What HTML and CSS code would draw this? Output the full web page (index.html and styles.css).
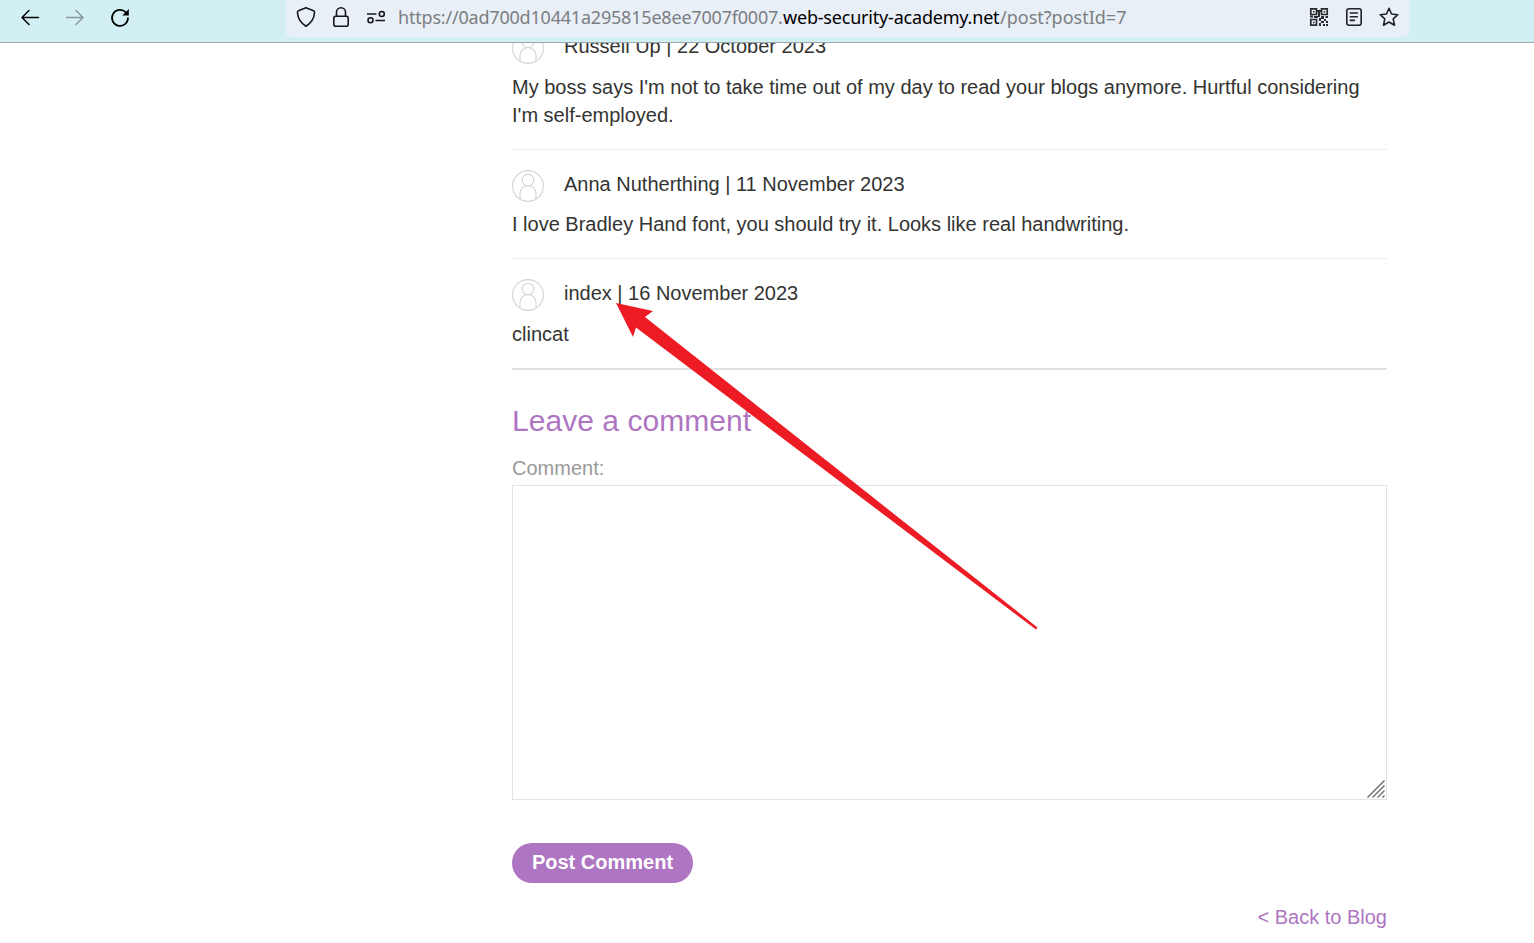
FILE: index.html
```html
<!DOCTYPE html>
<html lang="en">
<head>
<meta charset="utf-8">
<title>Blog post</title>
<link rel="stylesheet" href="styles.css">
</head>
<body>
<svg class="defs" width="0" height="0"><symbol id="avatar" viewBox="0 0 32 32"><g fill="none" stroke="#ced3d3" stroke-width="1.1"><circle cx="16" cy="16" r="15.4"/><circle cx="16" cy="10" r="5.8"/><path d="M8 29.2V23.5a8 8 0 0 1 16 0V29.2"/></g></symbol></svg>
<header class="toolbar">
  <nav class="nav">
    <svg width="20" height="20" viewBox="0 0 20 20" fill="none" stroke="#000" stroke-width="1.5" stroke-linecap="round" stroke-linejoin="round"><path d="M18.500 9.500H2M9 2.500L2 9.500l7 7"/></svg>
    <svg width="20" height="20" viewBox="0 0 20 20" fill="none" stroke="#879698" stroke-width="1.4" stroke-linecap="round" stroke-linejoin="round"><path d="M1.500 9.500H18M11 2.500l7 7-7 7"/></svg>
    <svg width="20" height="20" viewBox="0 0 20 20" fill="none" stroke="#000" stroke-width="1.7" stroke-linecap="round"><path d="M18 10a8 8 0 1 1-2.2-5.600"/><path d="M18.800 1v6.500h-6.500z" fill="#000" stroke="none"/></svg>
  </nav>
  <div class="address">
    <div class="info">
      <svg width="20" height="22" viewBox="0 0 20 22" fill="none" stroke="#15171a" stroke-width="1.6" stroke-linejoin="round"><path d="M10 1.800L17.600 4.700Q18.800 5.100 18.500 7C18 13.500 15.200 17 10 20.200C4.800 17 2 13.500 1.500 7Q1.200 5.100 2.400 4.700Z"/></svg>
      <svg width="20" height="22" viewBox="0 0 20 22" fill="none" stroke="#15171a" stroke-width="1.6"><rect x="2.800" y="10.300" width="14.400" height="9.900" rx="2"/><path d="M5.500 10V6.300a4.500 4.500 0 0 1 9 0V10"/></svg>
      <svg width="20" height="22" viewBox="0 0 20 22" fill="none" stroke="#15171a" stroke-width="1.6"><path d="M1 8h9.500M9.500 14.500H19"/><circle cx="15.800" cy="8" r="2.500"/><circle cx="4.500" cy="14.300" r="2.500"/></svg>
    </div>
    <div class="url"><span class="origin">https://0ad700d10441a295815e8ee7007f0007.</span><span class="domain">web-security-academy.net</span><span class="path">/post?postId=7</span></div>
    <div class="actions">
      <svg width="20" height="20" viewBox="0 0 20 20"><g fill="none" stroke="#292b2f" stroke-width="1.700"><path d="M1.800 1.800h5.700v5.700H1.800zM12.500 1.800h5.700v5.700h-5.700zM1.800 12.500h5.700v5.700H1.800z"/></g><path fill="#292b2f" d="M4 4h1.500v1.500H4zM14.700 4h1.500v1.500h-1.500zM4 14.700h1.500v1.500H4zM8 3h4v2H8zM9 5h2v5H9zM1 8.500h3v2H1zM5 9h4v2H5zM12 9h3v3h-3zM16.500 9H19v2h-2.500zM10 11h2v3h-2zM12 14h3v2h-3zM15 12h2v2h-2zM17 14h2v2h-2zM10 16h2v3h-2zM14 17h2v2h-2zM17 17h2v2h-2z"/></svg>
      <svg width="20" height="20" viewBox="0 0 20 20" fill="none" stroke="#202226" stroke-width="1.600" stroke-linecap="round"><rect x="2.800" y="1.800" width="14.400" height="16.400" rx="2.200"/><path d="M6.300 6h7M6.300 9.700h7M6.300 13.400h4"/></svg>
      <svg width="20" height="20" viewBox="0 0 20 20" fill="none" stroke="#202226" stroke-width="1.600" stroke-linejoin="round"><path d="M10 1.300l2.500 5.700 6.300.7-4.600 4.200 1.300 6.300-5.500-3.200-5.500 3.200 1.300-6.300L1.200 7.700l6.300-.7z"/></svg>
    </div>
  </div>
</header>
<main class="page">
  <div class="content">
    <section class="comment first">
      <div class="author"><svg class="avatar"><use href="#avatar"/></svg><span>Russell Up | 22 October 2023</span></div>
      <p>My boss says I'm not to take time out of my day to read your blogs anymore. Hurtful considering<br>I'm self-employed.</p>
    </section>
    <section class="comment">
      <div class="author"><svg class="avatar"><use href="#avatar"/></svg><span>Anna Nutherthing | 11 November 2023</span></div>
      <p>I love Bradley Hand font, you should try it. Looks like real handwriting.</p>
    </section>
    <section class="comment last">
      <div class="author"><svg class="avatar"><use href="#avatar"/></svg><span>index | 16 November 2023</span></div>
      <p>clincat</p>
    </section>
    <form class="form">
      <h2>Leave a comment</h2>
      <label for="comment">Comment:</label>
      <div class="field"><textarea id="comment"></textarea><svg class="grip" width="20" height="20" viewBox="0 0 20 20" stroke="#646469" stroke-width="1.300"><path d="M1.500 17.500L18.500 .5M6.500 17.500L18.500 5.500M11.500 17.500L18.500 10.500M16.500 17.500L18.500 15.500"/></svg></div>
      <button type="button">Post Comment</button>
    </form>
    <a class="back">&lt; Back to Blog</a>
  </div>
</main>
<svg class="arrow" width="1534" height="943" viewBox="0 0 1534 943"><path fill="#ed1c24" d="M616 303L653 311L645 317L1037.500 627.500L1036 629.500L636 327.500L633 337Z"/></svg>
</body>
</html>
```
FILE: styles.css
```css
* { box-sizing: border-box; }
body { margin: 0; height: 943px; overflow: hidden; background: #fff; color: #333332; font: 20px/28px "Liberation Sans", Arial, sans-serif; display: flex; flex-direction: column; }
.defs { position: absolute; }
svg { display: block; flex: none; }
.toolbar { height: 43px; flex: none; background: #d2eff3; border-bottom: 1px solid #98a9ae; display: flex; align-items: flex-start; }
.nav { width: 286px; height: 36px; padding-left: 20px; display: flex; gap: 25px; align-items: center; }
.address { width: 1123px; height: 37px; background: #e9eff6; border-radius: 0 0 5px 5px; display: flex; align-items: center; padding: 0 10px 3px; }
.info { display: flex; gap: 15px; width: 102px; }
.url { flex: 1; display: flex; font: 18px/28px "Noto Sans", sans-serif; white-space: pre; color: #7b7e82; }
.origin { width: 385px; letter-spacing: -0.2px; }
.domain { width: 217px; color: #000; letter-spacing: -0.2px; }
.actions { display: flex; gap: 15px; }
.page { flex: 1; min-height: 0; overflow: hidden; }
.content { width: 875px; margin-left: 512px; display: flex; flex-direction: column; }
.comment { border-bottom: 1px solid #ededed; padding: 20px 0; height: 109px; }
.comment.first { height: 107px; padding-top: 0; }
.comment.last { height: 111px; border-bottom: 2px solid #e2e2e2; }
.author { display: flex; gap: 20px; height: 32px; align-items: flex-start; }
.avatar { width: 32px; height: 32px; }
.first .author { margin-top: -11px; }
.comment p { margin: 8px 0 0; white-space: nowrap; }
.comment.first p, .last p { margin-top: 9px; }
.form { display: flex; flex-direction: column; align-items: flex-start; }
h2 { margin: 30px 0 0; font-size: 30px; line-height: 42px; font-weight: 400; color: #ae75c2; letter-spacing: 0.04px; }
label { margin-top: 12px; height: 31px; color: #999; }
.field { width: 875px; height: 315px; position: relative; }
textarea { display: block; width: 100%; height: 100%; border: 1px solid #e3e3e3; outline: 0; resize: none; background: #fff; }
.grip { position: absolute; right: 1px; bottom: 0; }
button { margin-top: 43px; width: 181px; height: 40px; padding: 0 0 2px; border: 0; border-radius: 20px; background: #ae75c2; color: #fff; font: bold 20px/28px "Liberation Sans", Arial, sans-serif; }
.back { align-self: flex-end; margin-top: 20px; color: #ae75c2; }
.arrow { position: absolute; left: 0; top: 0; pointer-events: none; }
```
